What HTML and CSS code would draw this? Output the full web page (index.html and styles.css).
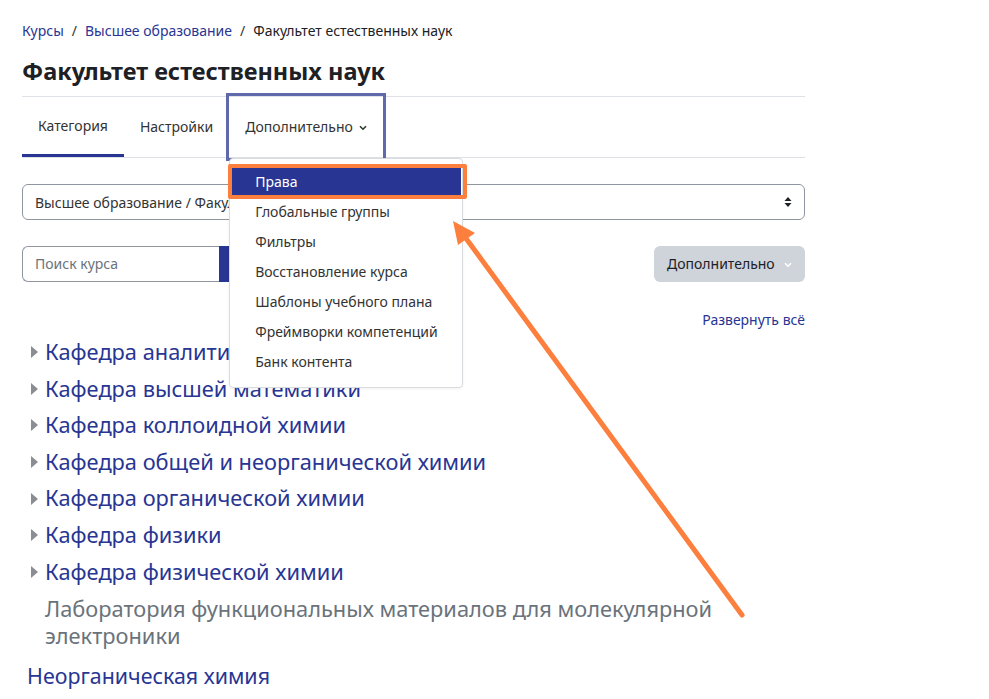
FILE: index.html
```html
<!DOCTYPE html>
<html>
	<head>
		<meta charset="utf-8">
		<title>Факультет естественных наук</title>
		<link rel="stylesheet" href="styles.css">
	</head>
	<body>
		<div id="page">
			<div class="breadcrumb">
				<a href="#">Курсы</a>
				<span class="sep">/</span>
				<a href="#">Высшее образование</a>
				<span class="sep">/</span>
				<span class="current">Факультет естественных наук</span>
			</div>
			<div class="header">
				<h1>Факультет естественных наук</h1>
			</div>

			<div class="tabs">
				<div class="tab active">Категория</div>
				<div class="tab">Настройки</div>
				<div class="tab more focused">Дополнительно
					<svg class="chev" width="8" height="6" viewBox="0 0 8 6"><path d="M1 1.2 L4 4.2 L7 1.2" fill="none" stroke="#333" stroke-width="1.6"/></svg>
					<div class="menu">
						<div class="menu-item selected">Права</div>
						<div class="menu-item">Глобальные группы</div>
						<div class="menu-item">Фильтры</div>
						<div class="menu-item">Восстановление курса</div>
						<div class="menu-item">Шаблоны учебного плана</div>
						<div class="menu-item">Фреймворки компетенций</div>
						<div class="menu-item">Банк контента</div>
					</div>
				</div>
			</div>

			<div class="select">
				<span>Высшее образование / Факультет естественных наук</span>
				<svg width="8" height="12" viewBox="0 0 8 12"><path d="M4 1 L7.5 5 L0.5 5 Z M4 11 L7.5 7 L0.5 7 Z" fill="#1d2125"/></svg>
			</div>

			<div class="toolbar">
				<div class="search">
					<div class="search-input">Поиск курса</div>
					<div class="search-btn"></div>
				</div>
				<div class="btn-more">Дополнительно
					<svg width="8" height="6" viewBox="0 0 8 6"><path d="M1 1.2 L4 4.2 L7 1.2" fill="none" stroke="#fff" stroke-width="1.6"/></svg>
				</div>
			</div>

			<div class="expand"><a href="#">Развернуть всё</a></div>

			<div class="categories">
				<div class="cat"><span class="tri"></span><a href="#">Кафедра аналитической химии</a></div>
				<div class="cat"><span class="tri"></span><a href="#">Кафедра высшей математики</a></div>
				<div class="cat"><span class="tri"></span><a href="#">Кафедра коллоидной химии</a></div>
				<div class="cat"><span class="tri"></span><a href="#">Кафедра общей и неорганической химии</a></div>
				<div class="cat"><span class="tri"></span><a href="#">Кафедра органической химии</a></div>
				<div class="cat"><span class="tri"></span><a href="#">Кафедра физики</a></div>
				<div class="cat"><span class="tri"></span><a href="#">Кафедра физической химии</a></div>
				<div class="cat empty">Лаборатория функциональных материалов для молекулярной электроники</div>
				<div class="cat top"><a href="#">Неорганическая химия</a></div>
			</div>
		</div>

		<!-- пометки поверх скриншота -->
		<div class="mark"></div>
		<svg class="arrow" width="989" height="699" viewBox="0 0 989 699">
			<line x1="742" y1="615" x2="465" y2="237" stroke="#fd7f3e" stroke-width="5" stroke-linecap="round"/>
			<polygon points="453,221 458,245 475,233" fill="#fd7f3e"/>
		</svg>
	</body>
</html>
```
FILE: styles.css
```css
body {
	margin: 0;
	font-family: "Noto Sans", "Open Sans", sans-serif;
	color: #1d2125;
	background: #fff;
}

a {
	color: #283593;
	text-decoration: none;
}

#page {
	width: 783px;
	padding-left: 22px;
	position: relative;
}

.breadcrumb {
	margin-top: 20px;
	font-size: 14px;
	line-height: 21px;
	display: flex;
	gap: 8px;
}

.breadcrumb .sep {
	color: #333;
}

.header {
	border-bottom: 1px solid #dee2e6;
	padding: 15px 0 10px;
}

.header h1 {
	margin: 0;
	font-size: 23.5px;
	line-height: 30px;
	font-weight: 700;
	color: #1d2125;
}

.tabs {
	display: flex;
	height: 60px;
	border-bottom: 1px solid #dee2e6;
}

.tab {
	padding: 0 16px;
	font-size: 14px;
	line-height: 60px;
	color: #333;
	position: relative;
	box-sizing: border-box;
}

.tab.active {
	border-bottom: 3px solid #283593;
	line-height: 57px;
}

.tab.focused {
	outline: 3px solid #6169ad;
	outline-offset: 0;
	margin-top: -1px;
	height: 62px;
	line-height: 62px;
}

.chev {
	margin-left: 2px;
	vertical-align: middle;
}

.menu {
	position: absolute;
	left: 0;
	top: 62px;
	width: 234px;
	box-sizing: border-box;
	padding: 8px 0 10px;
	background: #fff;
	border: 1px solid #d9dcdf;
	border-radius: 4px;
	z-index: 10;
	line-height: 30px;
	box-shadow: 0 1px 3px rgba(0, 0, 0, 0.06);
}

.menu-item {
	padding: 0 0 0 25px;
	font-size: 14px;
	height: 30px;
	color: #333;
	white-space: nowrap;
}

.menu-item.selected {
	background: #283593;
	color: #fff;
	margin: 0 1px;
	padding-left: 24px;
}

.select {
	margin-top: 26px;
	height: 36px;
	box-sizing: border-box;
	border: 1px solid #8f959e;
	border-radius: 6px;
	display: flex;
	align-items: center;
	justify-content: space-between;
	padding: 0 12px 0 12px;
	font-size: 14px;
	color: #333;
}

.toolbar {
	margin-top: 26px;
	display: flex;
	justify-content: space-between;
	height: 36px;
}

.search {
	display: flex;
}

.search-input {
	width: 197px;
	box-sizing: border-box;
	border: 1px solid #8f959e;
	border-right: none;
	border-radius: 6px 0 0 6px;
	padding: 0 12px;
	font-size: 14px;
	line-height: 34px;
	color: #6a737b;
}

.search-btn {
	width: 38px;
	background: #283593;
	border-radius: 0 6px 6px 0;
}

.btn-more {
	width: 151px;
	box-sizing: border-box;
	background: #ced4da;
	border-radius: 6px;
	font-size: 14px;
	line-height: 36px;
	padding-left: 13px;
	color: #1d2125;
}

.btn-more svg {
	margin-left: 6px;
	vertical-align: middle;
}

.expand {
	margin-top: 27px;
	text-align: right;
	font-size: 14px;
	line-height: 21px;
}

.categories {
	margin-top: 4px;
}

.cat {
	display: flex;
	align-items: center;
	font-size: 21.8px;
	line-height: 36.6px;
	padding-left: 9px;
}

.cat a {
	color: #283593;
}

.tri {
	width: 0;
	height: 0;
	border-top: 6px solid transparent;
	border-bottom: 6px solid transparent;
	border-left: 7px solid #8a8d91;
	margin-right: 7px;
}

.cat.empty {
	padding-left: 23px;
	color: #6a737b;
	line-height: 27px;
	margin-top: 5px;
}

.cat.top {
	padding-left: 5px;
	margin-top: 12px;
	font-size: 21.4px;
	line-height: 30px;
}

.mark {
	position: absolute;
	left: 228px;
	top: 164px;
	width: 239px;
	height: 35px;
	box-sizing: border-box;
	border: 4px solid #fd7f3e;
	border-radius: 2px;
	z-index: 20;
}

.arrow {
	position: absolute;
	left: 0;
	top: 0;
	z-index: 20;
	pointer-events: none;
}
```
